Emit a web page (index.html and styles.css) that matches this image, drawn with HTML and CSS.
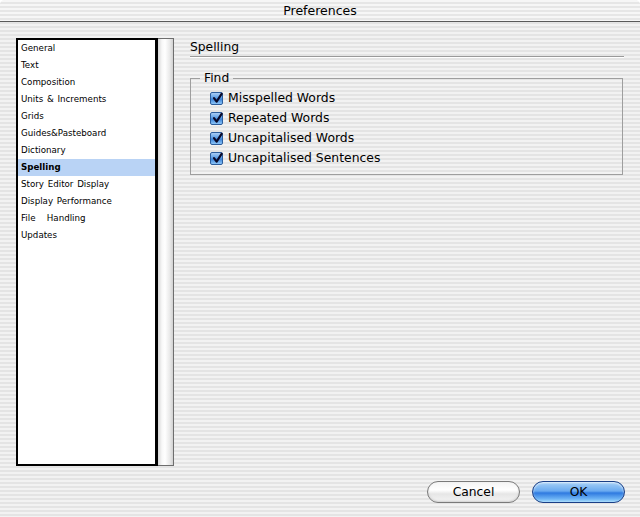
FILE: index.html
```html
<!DOCTYPE html>
<html>
<head>
<meta charset="utf-8">
<link rel="stylesheet" href="styles.css">
</head>
<body>
<div class="window">
  <div class="titlebar">Preferences</div>
  <div class="main">
    <div class="listbox">
      <ul class="list">
        <li>General</li>
        <li>Text</li>
        <li>Composition</li>
        <li>Units &amp; Increments</li>
        <li>Grids</li>
        <li>Guides&amp;Pasteboard</li>
        <li>Dictionary</li>
        <li class="selected">Spelling</li>
        <li>Story Editor Display</li>
        <li>Display Performance</li>
        <li>File&nbsp;&nbsp; Handling</li>
        <li>Updates</li>
      </ul>
      <div class="scrollbar"></div>
    </div>
    <div class="panel">
      <div class="section-title">Spelling</div>
      <fieldset class="group">
        <legend>Find</legend>
        <label class="check"><span class="box"><svg viewBox="0 0 13 13" width="13" height="13"><path d="M3 6.2 L5.6 9.6 L10.6 1.8" fill="none" stroke="#0a0a2a" stroke-width="2.2" stroke-linecap="round" stroke-linejoin="round"/></svg></span>Misspelled Words</label>
        <label class="check"><span class="box"><svg viewBox="0 0 13 13" width="13" height="13"><path d="M3 6.2 L5.6 9.6 L10.6 1.8" fill="none" stroke="#0a0a2a" stroke-width="2.2" stroke-linecap="round" stroke-linejoin="round"/></svg></span>Repeated Words</label>
        <label class="check"><span class="box"><svg viewBox="0 0 13 13" width="13" height="13"><path d="M3 6.2 L5.6 9.6 L10.6 1.8" fill="none" stroke="#0a0a2a" stroke-width="2.2" stroke-linecap="round" stroke-linejoin="round"/></svg></span>Uncapitalised Words</label>
        <label class="check"><span class="box"><svg viewBox="0 0 13 13" width="13" height="13"><path d="M3 6.2 L5.6 9.6 L10.6 1.8" fill="none" stroke="#0a0a2a" stroke-width="2.2" stroke-linecap="round" stroke-linejoin="round"/></svg></span>Uncapitalised Sentences</label>
      </fieldset>
    </div>
  </div>
  <div class="buttons">
    <button class="btn cancel">Cancel</button>
    <button class="btn ok">OK</button>
  </div>
</div>
</body>
</html>
```
FILE: styles.css
```css
html, body {
  margin: 0;
  padding: 0;
}
body {
  width: 640px;
  height: 517px;
  overflow: hidden;
  font-family: "DejaVu Sans", "Liberation Sans", sans-serif;
  color: #000;
}
.window {
  width: 640px;
  height: 517px;
  display: flex;
  flex-direction: column;
  background: repeating-linear-gradient(to bottom, #f2f2f2 0px, #f2f2f2 2px, #e4e4e4 2px, #e4e4e4 4px);
  border-radius: 5px 5px 0 0;
}
.titlebar {
  height: 21px;
  line-height: 22px;
  text-align: center;
  font-size: 12.5px;
  border-bottom: 1px solid #5a5a5a;
  background: repeating-linear-gradient(to bottom, #f6f6f6 0px, #f6f6f6 2px, #e6e6e6 2px, #e6e6e6 4px);
  border-radius: 5px 5px 0 0;
  flex: none;
}
.main {
  display: flex;
  padding: 16px 16px 0 16px;
  flex: none;
}
.listbox {
  display: flex;
  width: 158px;
  height: 428px;
  flex: none;
}
.list {
  margin: 0;
  padding: 0;
  list-style: none;
  width: 137px;
  height: 424px;
  background: #fff;
  border: 2px solid #000;
  border-right-width: 3px;
  font-size: 8.7px;
  font-family: "DejaVu Sans", sans-serif;
  word-spacing: 1px;
}
.list li {
  height: 17px;
  line-height: 17px;
  padding-left: 3px;
  white-space: nowrap;
}
.list li.selected {
  background: #b9d3f5;
  font-weight: bold;
}
.scrollbar {
  width: 15px;
  height: 426px;
  border: 1px solid #6e6e6e;
  border-left: none;
  background: linear-gradient(to right, #d6d6d6 0px, #f8f8f8 4px, #ffffff 7px, #e8e8e8 12px, #d2d2d2 15px);
}
.panel {
  margin-left: 16px;
  width: 434px;
}
.section-title {
  font-size: 12.3px;
  height: 17px;
  line-height: 17px;
  padding-top: 1px;
  border-bottom: 1px solid #9a9a9a;
  box-shadow: 0 1px 0 #ffffff;
}
.group {
  margin: 14px 0 0 0;
  padding: 2px 0 6px 19px;
  border: 1px solid #9e9e9e;
  border-radius: 0;
  width: 412px;
  min-width: 0;
}
.group legend {
  font-size: 12.3px;
  padding: 0 4px;
  margin-left: -10px;
  line-height: 15px;
}
.check {
  display: flex;
  align-items: center;
  height: 20px;
  font-size: 12.4px;
  line-height: 20px;
}
.box {
  width: 13px;
  height: 13px;
  margin-right: 5px;
  border-radius: 2px;
  border: 1px solid #2c5d9c;
  background: linear-gradient(to bottom, #a9cdf5 0%, #5b9ee6 45%, #3a83d8 55%, #8cc4f7 100%);
  display: flex;
  box-sizing: border-box;
  position: relative;
  overflow: visible;
}
.box svg {
  position: absolute;
  left: 0;
  top: -1px;
}
.buttons {
  display: flex;
  justify-content: flex-end;
  gap: 12px;
  padding: 15px 15px 0 0;
}
.btn {
  height: 22px;
  width: 93px;
  border-radius: 11px;
  font-family: "DejaVu Sans", sans-serif;
  font-size: 12.3px;
  padding: 0;
  line-height: 20px;
  color: #000;
}
.cancel {
  border: 1px solid #7a7a7a;
  background: linear-gradient(to bottom, #f4f4f4 0%, #ffffff 40%, #e6e6e6 60%, #f4f4f4 100%);
  box-shadow: inset 0 -1px 2px #cfcfcf;
}
.ok {
  border: 1px solid #1b3f86;
  background: linear-gradient(to bottom, #a6d0f6 0%, #6aaaf0 45%, #2f7ae0 55%, #6fb5f5 85%, #a9ddfb 100%);
  box-shadow: inset 0 1px 2px rgba(255,255,255,0.7);
}
```
